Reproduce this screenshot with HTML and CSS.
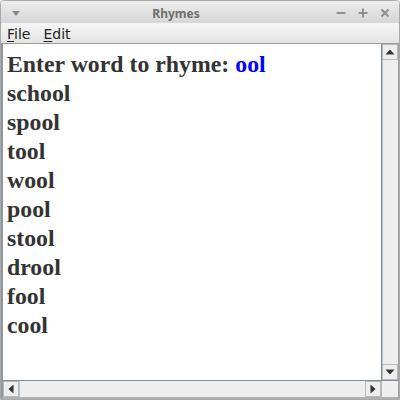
FILE: index.html
```html
<!DOCTYPE html>
<html>
<head>
<meta charset="utf-8">
<link rel="stylesheet" href="styles.css">
</head>
<body>
<div class="window">
  <div class="titlebar">
    <div class="tb-left">
      <svg width="12" height="8" viewBox="0 0 12 8"><polygon points="2,2 10,2 6,7" fill="#8a8a8a"/></svg>
    </div>
    <div class="title">Rhymes</div>
    <div class="tb-right">
      <svg width="12" height="12" viewBox="0 0 12 12"><rect x="1.5" y="5" width="9" height="2" fill="#8f8f8f"/></svg>
      <svg width="12" height="12" viewBox="0 0 12 12"><rect x="1.5" y="5" width="9" height="2" fill="#8f8f8f"/><rect x="5" y="1.5" width="2" height="9" fill="#8f8f8f"/></svg>
      <svg width="12" height="12" viewBox="0 0 12 12"><path d="M2.5 2.5 L9.5 9.5 M9.5 2.5 L2.5 9.5" stroke="#8f8f8f" stroke-width="2"/></svg>
    </div>
  </div>
  <div class="menubar">
    <span class="menu"><u>F</u>ile</span>
    <span class="menu"><u>E</u>dit</span>
  </div>
  <div class="scrollpane">
    <div class="viewport">
      <div class="text">
        <div class="line">Enter word to rhyme: <span class="input">ool</span></div>
        <div class="line">school</div>
        <div class="line">spool</div>
        <div class="line">tool</div>
        <div class="line">wool</div>
        <div class="line">pool</div>
        <div class="line">stool</div>
        <div class="line">drool</div>
        <div class="line">fool</div>
        <div class="line">cool</div>
      </div>
      <div class="vbar">
        <div class="sbtn"><svg width="10" height="6" viewBox="0 0 10 6"><polygon points="0.5,5.5 9.5,5.5 5,0.5" fill="#333"/></svg></div>
        <div class="vtrack"></div>
        <div class="sbtn"><svg width="10" height="6" viewBox="0 0 10 6"><polygon points="0.5,0.5 9.5,0.5 5,5.5" fill="#333"/></svg></div>
      </div>
    </div>
    <div class="hbar">
      <div class="sbtn h"><svg width="6" height="10" viewBox="0 0 6 10"><polygon points="5.5,0.5 5.5,9.5 0.5,5" fill="#333"/></svg></div>
      <div class="htrack"></div>
      <div class="sbtn h"><svg width="6" height="10" viewBox="0 0 6 10"><polygon points="0.5,0.5 0.5,9.5 5.5,5" fill="#333"/></svg></div>
      <div class="corner"></div>
    </div>
  </div>
</div>
</body>
</html>
```
FILE: styles.css
```css
html, body { margin: 0; padding: 0; background: #ffffff; }
.window {
  width: 400px; height: 400px; box-sizing: border-box;
  border: 1px solid #a9a9a9; border-radius: 4px 4px 0 0;
  display: flex; flex-direction: column; overflow: hidden;
  background: #eeeeee;
}
.titlebar {
  height: 22px; flex: none;
  display: flex; align-items: center;
  padding-top: 2px; box-sizing: border-box;
  background: linear-gradient(#ececec, #d6d6d6);
}
.tb-left { width: 26px; display: flex; justify-content: center; padding-left: 2px; }
.title {
  flex: 1; text-align: center;
  font: bold 12px "Noto Sans", sans-serif; color: #6f6f6f;
}
.tb-right {
  width: 76px; box-sizing: border-box; display: flex; gap: 10px; padding-left: 12px;
}
.menubar {
  height: 21px; flex: none; display: flex; align-items: center; gap: 13px;
  padding-left: 6px; padding-top: 1px; box-sizing: border-box;
  background: linear-gradient(#f5f5f5, #e4e4e4);
  border-bottom: 1px solid #9a9a9a;
  font: 14px "DejaVu Sans", sans-serif; color: #222;
}
.menu u { text-decoration-thickness: 1px; text-underline-offset: 2px; }
.scrollpane {
  flex: 1; display: flex; flex-direction: column;
  border-left: 2px solid #8e969e; border-right: 1px solid #a0a0a0; border-bottom: 2px solid #b0b0b0;
  min-height: 0;
}
.viewport { flex: 1; display: flex; min-height: 0; }
.text {
  flex: 1; background: #fff; padding: 6px 5px 0 4px;
  font: bold 23.8px "Liberation Serif", serif; color: #333333;
  line-height: 29px;
}
.input { color: #0000ff; }
.vbar {
  width: 16px; display: flex; flex-direction: column;
  border-left: 1px solid #7f8c99; background: #eeeeee;
}
.sbtn {
  height: 16px; box-sizing: border-box; flex: none;
  display: flex; align-items: center; justify-content: center;
  background: #eeeeee; border: 1px solid #b8b8b8;
}
.vtrack { flex: 1; border-left: 1px solid #b0c4d8; }
.hbar {
  height: 16px; display: flex; border-top: 1px solid #7f8c99; background: #eeeeee;
}
.sbtn.h { width: 16px; height: 16px; }
.htrack { flex: 1; border-left: 1px solid #b0c4d8; }
.corner { width: 16px; border-left: 1px solid #b8b8b8; }
```
